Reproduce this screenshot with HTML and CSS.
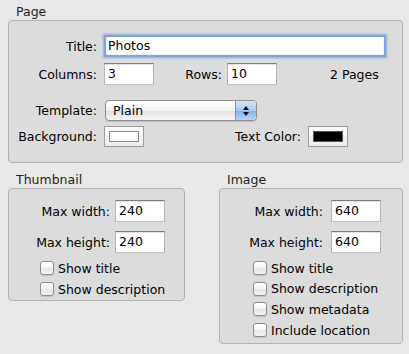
FILE: index.html
```html
<!DOCTYPE html>
<html>
<head>
<meta charset="utf-8">
<link rel="stylesheet" href="styles.css">
</head>
<body>
  <section class="group">
    <div class="group-title">Page</div>
    <div class="box page-box">
      <div class="row">
        <span class="label lbl-page">Title:</span>
        <span class="field field-title focused">Photos</span>
      </div>
      <div class="row">
        <span class="label lbl-page">Columns:</span>
        <span class="field">3</span>
        <span class="label lbl-rows">Rows:</span>
        <span class="field">10</span>
        <span class="pages">2 Pages</span>
      </div>
      <div class="row row-template">
        <span class="label lbl-page">Template:</span>
        <span class="popup">
          <span class="popup-text">Plain</span>
          <span class="popup-arrows">
            <svg width="8" height="12" viewBox="0 0 8 12"><path d="M4 1 L7 5 L1 5 Z" fill="#111"/><path d="M1 7 L7 7 L4 11 Z" fill="#111"/></svg>
          </span>
        </span>
      </div>
      <div class="row row-colors">
        <span class="label lbl-page">Background:</span>
        <span class="well"><span class="swatch swatch-white"></span></span>
        <span class="spacer"></span>
        <span class="label">Text Color:</span>
        <span class="well well-text"><span class="swatch swatch-black"></span></span>
      </div>
    </div>
  </section>

  <div class="bottom">
    <section class="group thumb-group">
      <div class="group-title title-lower">Thumbnail</div>
      <div class="box small-box">
        <div class="row">
          <span class="label lbl-thumb">Max width:</span>
          <span class="field field-num">240</span>
        </div>
        <div class="row row-second">
          <span class="label lbl-thumb">Max height:</span>
          <span class="field field-num">240</span>
        </div>
        <div class="checks checks-thumb">
          <div class="check"><span class="cb"></span><span>Show title</span></div>
          <div class="check"><span class="cb"></span><span>Show description</span></div>
        </div>
      </div>
    </section>

    <section class="group image-group">
      <div class="group-title title-lower">Image</div>
      <div class="box small-box image-box">
        <div class="row">
          <span class="label lbl-image">Max width:</span>
          <span class="field field-num">640</span>
        </div>
        <div class="row row-second">
          <span class="label lbl-image">Max height:</span>
          <span class="field field-num">640</span>
        </div>
        <div class="checks checks-image">
          <div class="check"><span class="cb"></span><span>Show title</span></div>
          <div class="check"><span class="cb"></span><span>Show description</span></div>
          <div class="check"><span class="cb"></span><span>Show metadata</span></div>
          <div class="check"><span class="cb"></span><span>Include location</span></div>
        </div>
      </div>
    </section>
  </div>
</body>
</html>
```

FILE: styles.css
```css
html, body {
  margin: 0;
}
body {
  width: 409px;
  height: 354px;
  box-sizing: border-box;
  padding: 4px 6px 0 8px;
  background: #e8e8e8;
  font-family: "DejaVu Sans", sans-serif;
  font-size: 12.5px;
  color: #000;
  overflow: hidden;
}
.group-title {
  height: 16px;
  line-height: 16px;
  padding-left: 8px;
  color: #222;
}
.title-lower {
  margin-top: 9px;
}
.box {
  border: 1px solid #b2b2b2;
  border-radius: 4px;
  background: #dcdcdc;
  box-sizing: border-box;
}
.page-box {
  height: 143px;
  padding: 14px 0 16px 0;
  display: flex;
  flex-direction: column;
}
.row {
  display: flex;
  align-items: center;
  height: 22px;
  margin-bottom: 6px;
}
.label {
  white-space: nowrap;
  text-align: right;
}
.lbl-page {
  width: 88px;
  margin-right: 7px;
}
.field {
  box-sizing: border-box;
  width: 50px;
  height: 22px;
  background: #fff;
  border: 1px solid;
  border-color: #7c7c7c #b4b4b4 #c4c4c4 #b4b4b4;
  box-shadow: inset 0 1px 1px rgba(0,0,0,0.12);
  padding: 0 3px;
  line-height: 20px;
  white-space: nowrap;
}
.field-title {
  width: 282px;
}
.focused {
  border: 2px solid #7fa5dc;
  box-shadow: 0 0 2px 1px rgba(80,130,210,0.55), inset 0 0 1px rgba(60,110,200,0.6);
  padding-left: 2px;
  line-height: 18px;
}
.lbl-rows {
  width: 38px;
  margin-left: 30px;
  margin-right: 5px;
}
.pages {
  margin-left: 53px;
}
.row-template {
  margin-top: 9px;
  height: 21px;
  margin-bottom: 5px;
}
.popup {
  margin-left: 1px;
  box-sizing: border-box;
  width: 152px;
  height: 21px;
  border: 1px solid #8e8e8e;
  border-radius: 4px;
  background: linear-gradient(#ffffff, #f2f2f2 50%, #e2e2e2 51%, #f4f4f4);
  display: flex;
  overflow: hidden;
  box-shadow: 0 1px 1px rgba(0,0,0,0.15);
}
.popup-text {
  flex: 1;
  padding-left: 7px;
  line-height: 19px;
}
.popup-arrows {
  width: 20px;
  border-left: 1px solid #6f94c9;
  background: linear-gradient(#d5e5f9, #a9c9f2 50%, #7fb0ee 51%, #b3d4fb);
  display: flex;
  align-items: center;
  justify-content: center;
}
.popup-arrows svg {
  display: block;
}
.row-colors {
  height: 20px;
  margin-bottom: 0;
}
.well {
  box-sizing: border-box;
  width: 40px;
  height: 21px;
  border: 1px solid #9c9c9c;
  background: linear-gradient(#fbfbfb, #ececec);
  display: flex;
  align-items: center;
  justify-content: center;
}
.swatch {
  box-sizing: border-box;
  width: 30px;
  height: 11px;
  border: 1px solid #8a8a8a;
}
.swatch-white {
  background: #fff;
}
.swatch-black {
  background: #000;
  border-color: #555;
}
.spacer {
  flex: 1;
}
.well-text {
  margin-left: 7px;
  margin-right: 54px;
}
.bottom {
  display: flex;
  gap: 34px;
  align-items: flex-start;
}
.thumb-group {
  width: 177px;
}
.image-group {
  width: 184px;
}
.small-box {
  padding: 11px 0 2px 0;
}
.image-box {
  padding-bottom: 4px;
}
.row-second {
  margin-top: 9px;
  margin-bottom: 6px;
}
.small-box .row:first-child {
  margin-bottom: 0;
}
.lbl-thumb {
  width: 101px;
  margin-right: 5px;
}
.lbl-image {
  width: 103px;
  margin-right: 8px;
}
.field-num {
  width: 50px;
}
.checks {
  display: flex;
  flex-direction: column;
  gap: 3px;
}
.checks-thumb {
  padding-left: 31px;
}
.checks-image {
  padding-left: 33px;
  gap: 2.7px;
}
.check {
  display: flex;
  align-items: center;
  height: 18px;
  gap: 4px;
  white-space: nowrap;
}
.cb {
  box-sizing: border-box;
  width: 14px;
  height: 14px;
  border: 1px solid #8d8d8d;
  border-radius: 3px;
  background: linear-gradient(#ffffff, #f4f4f4 50%, #e6e6e6 51%, #f3f3f3);
  box-shadow: 0 1px 1px rgba(0,0,0,0.12);
}
```
